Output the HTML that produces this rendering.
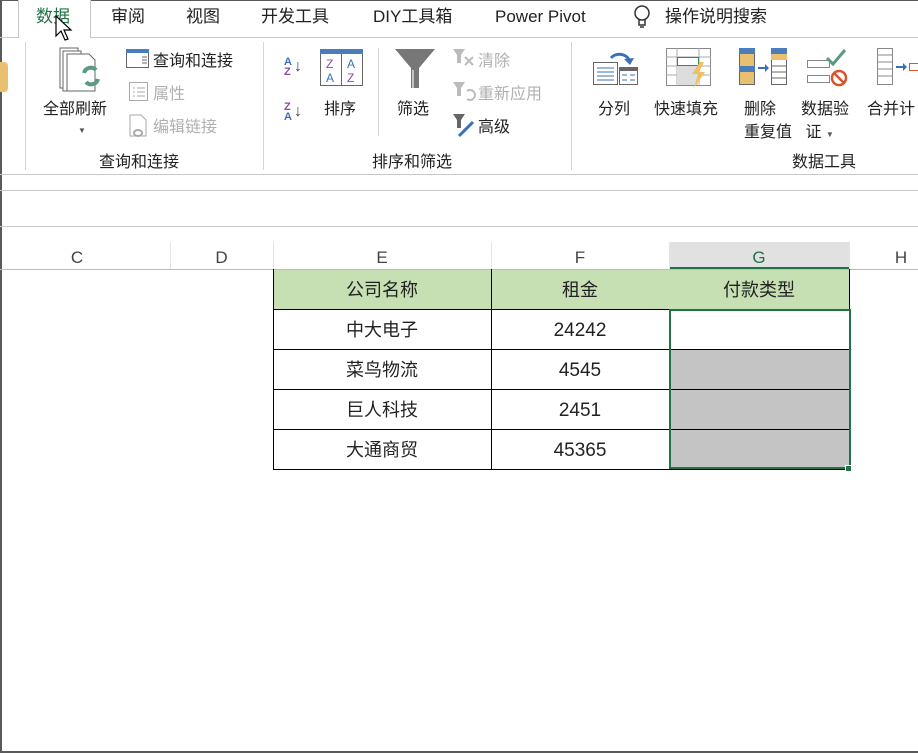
<!DOCTYPE html>
<html><head><meta charset="utf-8"><style>
*{margin:0;padding:0;box-sizing:border-box}
body{width:918px;height:753px;overflow:hidden;background:#fff;position:relative;font-family:"Liberation Sans","Noto Sans CJK SC",sans-serif;color:#222}
.a{position:absolute;white-space:nowrap}
.t{font-size:17px;top:0;height:32px;line-height:32px;margin-top:1px}
.r{font-size:16px;line-height:22px;margin-top:3px}
.g{color:#b0b0b0}
.h{height:1px;background:#c8c8c8;position:absolute}
.v{width:1px;background:#d4d4d4;position:absolute}
.ch{position:absolute;top:244px;height:26px;text-align:center;font-size:17px;color:#444;line-height:28px}
.c{position:absolute;text-align:center;font-size:18px;height:40px;line-height:40px;margin-top:2px}
.n{font-size:19px}
</style></head><body>
<div class="a" style="left:0;top:0;width:2px;height:753px;background:#5a5a5a"></div>
<div class="a" style="left:0;top:0;width:918px;height:1px;background:#5a5a5a"></div>
<div class="a" style="left:0;top:751px;width:918px;height:2px;background:#5a5a5a"></div>
<div class="a" style="left:18px;top:0;width:73px;height:38px;border:1px solid #c8c8c8;border-top:none;border-bottom:none;background:#fff"></div>
<div class="h" style="left:0;top:37px;width:18px"></div>
<div class="h" style="left:91px;top:37px;width:827px"></div>
<div class="a t" style="left:36px;color:#217346">数据</div>
<div class="a t" style="left:111px">审阅</div>
<div class="a t" style="left:186px">视图</div>
<div class="a t" style="left:261px">开发工具</div>
<div class="a t" style="left:373px">DIY工具箱</div>
<div class="a t" style="left:495px">Power Pivot</div>
<svg class="a" style="left:632px;top:4px" width="20" height="26"><circle cx="10" cy="9" r="7" fill="none" stroke="#333" stroke-width="1.5"/><path d="M7 16v5h6v-5M8 23h4" stroke="#333" fill="none" stroke-width="1.5"/></svg>
<div class="a t" style="left:665px">操作说明搜索</div>
<svg class="a" style="left:54px;top:14px" width="20" height="30"><path d="M2 2v20l5-5 4 9 3-1-4-9h7z" fill="#fff" stroke="#000" stroke-width="1.2"/></svg>
<div class="a" style="left:0;top:62px;width:8px;height:30px;background:#e8c070;border-radius:0 4px 4px 0"></div>
<div class="v" style="left:25px;top:42px;height:128px"></div>
<div class="v" style="left:263px;top:42px;height:128px"></div>
<div class="v" style="left:378px;top:48px;height:88px"></div>
<div class="v" style="left:571px;top:42px;height:128px"></div>
<svg class="a" style="left:58px;top:47px" width="50" height="50"><g fill="#fff" stroke="#666"><path d="M2 1h18v40H2z"/><path d="M5 4h18v40H5z"/><path d="M9 7h22l6 6v31H9z"/></g><path d="M26 26a7 7 0 0 1 12-3M40 32a7 7 0 0 1-12 3" stroke="#5a9a80" stroke-width="4" fill="none"/></svg>
<div class="a r" style="left:43px;top:96px">全部刷新</div>
<div class="a" style="left:78px;top:126px;font-size:8px;color:#555">▼</div>
<svg class="a" style="left:126px;top:49px" width="24" height="20"><rect x="0.5" y="0.5" width="22" height="18" fill="#fff" stroke="#666"/><rect x="0" y="0" width="23" height="4" fill="#4a7ebb"/><path d="M16 8h5M16 11h5M16 14h5" stroke="#666"/></svg>
<div class="a r" style="left:153px;top:48px">查询和连接</div>
<svg class="a" style="left:129px;top:82px" width="20" height="20"><rect x="0.5" y="0.5" width="18" height="18" fill="#fff" stroke="#aaa"/><path d="M4 6h2M8 6h8M4 10h2M8 10h8M4 14h2M8 14h8" stroke="#aaa"/></svg>
<div class="a r g" style="left:153px;top:81px">属性</div>
<svg class="a" style="left:129px;top:114px" width="22" height="24"><path d="M1 1h11l5 5v16H1z" fill="#fff" stroke="#aaa"/><ellipse cx="9" cy="19" rx="4" ry="3" fill="none" stroke="#aaa" stroke-width="2"/></svg>
<div class="a r g" style="left:153px;top:114px">编辑链接</div>
<div class="a r" style="left:99px;top:149px">查询和连接</div>
<div class="a" style="left:284px;top:57px;font-size:11px;font-weight:bold;line-height:10px;color:#3a70b8">A<br><span style="color:#8a4aa8">Z</span></div>
<div class="a" style="left:294px;top:58px;font-size:16px;color:#444">↓</div>
<div class="a" style="left:284px;top:102px;font-size:11px;font-weight:bold;line-height:10px;color:#8a4aa8">Z<br><span style="color:#3a70b8">A</span></div>
<div class="a" style="left:294px;top:103px;font-size:16px;color:#444">↓</div>
<svg class="a" style="left:320px;top:49px" width="44" height="38"><rect x="0.5" y="0.5" width="42" height="36" fill="#fff" stroke="#666"/><rect x="0" y="0" width="43" height="5" fill="#4a7ebb"/><path d="M21.5 5v32" stroke="#666"/><text x="6" y="19" font-size="12" fill="#8a4aa8" font-family="Liberation Sans">Z</text><text x="6" y="33" font-size="12" fill="#3a70b8" font-family="Liberation Sans">A</text><text x="27" y="19" font-size="12" fill="#3a70b8" font-family="Liberation Sans">A</text><text x="27" y="33" font-size="12" fill="#8a4aa8" font-family="Liberation Sans">Z</text></svg>
<div class="a r" style="left:324px;top:96px">排序</div>
<svg class="a" style="left:394px;top:48px" width="44" height="42"><path d="M1 1h40L25 20v20h-8V20z" fill="#777"/><path d="M19 22v18" stroke="#ddd" stroke-width="1.5"/></svg>
<div class="a r" style="left:397px;top:96px">筛选</div>
<svg class="a" style="left:453px;top:49px" width="24" height="20"><path d="M0 0h12l-4 6v8h-4V6z" fill="#bbb"/><path d="M12 8l8 8M20 8l-8 8" stroke="#bbb" stroke-width="2"/></svg>
<div class="a r g" style="left:478px;top:48px">清除</div>
<svg class="a" style="left:453px;top:82px" width="24" height="20"><path d="M0 0h12l-4 6v8h-4V6z" fill="#bbb"/><path d="M14 9a5 5 0 1 1 0 8" stroke="#bbb" stroke-width="2" fill="none"/></svg>
<div class="a r g" style="left:478px;top:81px">重新应用</div>
<svg class="a" style="left:453px;top:114px" width="24" height="24"><path d="M0 0h12l-4 6v8h-4V6z" fill="#666"/><path d="M6 22l14-14" stroke="#3a70b8" stroke-width="3"/></svg>
<div class="a r" style="left:478px;top:114px">高级</div>
<div class="a r" style="left:372px;top:149px">排序和筛选</div>
<svg class="a" style="left:593px;top:48px" width="46" height="40"><rect x="0.5" y="14.5" width="24" height="22" fill="#fff" stroke="#666"/><path d="M4 20h17M4 24h17M4 28h17M4 32h17" stroke="#3a70b8"/><rect x="26.5" y="19.5" width="18" height="17" fill="#fff" stroke="#666"/><rect x="26" y="19" width="19" height="4" fill="#666"/><path d="M29 27h5M37 27h5M29 32h5M37 32h5" stroke="#3a70b8"/><path d="M18 10a10 8 0 0 1 18 2" stroke="#3a70b8" stroke-width="3" fill="none"/><path d="M31 11l6 6 4-7z" fill="#3a70b8"/></svg>
<div class="a r" style="left:598px;top:96px">分列</div>
<svg class="a" style="left:666px;top:48px" width="48" height="44"><rect x="0.5" y="0.5" width="44" height="37" fill="#fff" stroke="#888"/><path d="M0 9h45M0 18h45M0 27h45M11 0v38M33 0v38" stroke="#aaa"/><rect x="11" y="18" width="22" height="19" fill="#ddd"/><rect x="11.5" y="9.5" width="21" height="8" fill="none" stroke="#2f8a66"/><path d="M34 14l-8 12h6l-4 14 11-16h-6l5-10z" fill="#f0c060"/></svg>
<div class="a r" style="left:654px;top:96px">快速填充</div>
<svg class="a" style="left:739px;top:48px" width="50" height="40"><rect x="0.5" y="0.5" width="15" height="36" fill="#e8c070" stroke="#666"/><rect x="0" y="0" width="16" height="6" fill="#4a7ebb"/><rect x="0" y="18" width="16" height="6" fill="#4a7ebb"/><path d="M19 20h8" stroke="#3a70b8" stroke-width="2"/><path d="M26 16l4 4-4 4z" fill="#3a70b8"/><rect x="32.5" y="0.5" width="15" height="36" fill="#fff" stroke="#666"/><rect x="32" y="0" width="16" height="6" fill="#4a7ebb"/><rect x="32" y="6" width="16" height="6" fill="#e8c070"/><path d="M32 18h16M32 24h16M32 30h16" stroke="#666"/></svg>
<div class="a r" style="left:744px;top:95px;line-height:23px">删除<br>重复值</div>
<svg class="a" style="left:807px;top:48px" width="44" height="40"><rect x="0.5" y="12.5" width="22" height="7" fill="#fff" stroke="#888"/><rect x="0.5" y="27.5" width="22" height="7" fill="#fff" stroke="#888"/><path d="M20 10l6 6 12-14" stroke="#5a9a80" stroke-width="3" fill="none"/><circle cx="32" cy="30" r="7" fill="#fff" stroke="#d9542b" stroke-width="2.5"/><path d="M27 25l10 10" stroke="#d9542b" stroke-width="2.5"/></svg>
<div class="a r" style="left:801px;top:95px;line-height:23px">数据验<br>&nbsp;证 <span style="font-size:8px;color:#555">▼</span></div>
<svg class="a" style="left:877px;top:48px" width="41" height="40"><rect x="0.5" y="0.5" width="15" height="36" fill="#fff" stroke="#888"/><path d="M0 7h16M0 14h16M0 21h16M0 28h16" stroke="#888"/><path d="M19 19h8" stroke="#3a70b8" stroke-width="2"/><path d="M26 15l4 4-4 4z" fill="#3a70b8"/><rect x="32.5" y="15.5" width="9" height="7" fill="#fff" stroke="#d9542b"/></svg>
<div class="a r" style="left:867px;top:96px">合并计</div>
<div class="a r" style="left:792px;top:149px">数据工具</div>
<div class="h" style="left:0;top:174px;width:918px"></div>
<div class="h" style="left:0;top:190px;width:918px"></div>
<div class="h" style="left:0;top:226px;width:918px"></div>
<div class="a" style="left:669px;top:242px;width:180px;height:27px;background:#e1e1e1"></div>
<div class="a" style="left:669px;top:267px;width:181px;height:2px;background:#217346"></div>
<div class="v" style="left:170px;top:242px;height:27px;background:#e4e4e4"></div>
<div class="v" style="left:273px;top:242px;height:27px;background:#e4e4e4"></div>
<div class="v" style="left:491px;top:242px;height:27px;background:#e4e4e4"></div>
<div class="v" style="left:669px;top:242px;height:27px;background:#e4e4e4"></div>
<div class="v" style="left:849px;top:242px;height:27px;background:#e4e4e4"></div>
<div class="h" style="left:0;top:269px;width:918px;background:#bcbcbc"></div>
<div class="ch" style="left:0;width:154px">C</div>
<div class="ch" style="left:170px;width:103px">D</div>
<div class="ch" style="left:273px;width:218px">E</div>
<div class="ch" style="left:491px;width:178px">F</div>
<div class="ch" style="left:669px;width:180px;color:#217346">G</div>
<div class="ch" style="left:849px;width:104px">H</div>
<div class="a" style="left:273px;top:270px;width:577px;height:39px;background:#c6e0b4"></div>
<div class="a" style="left:670px;top:349px;width:179px;height:120px;background:#c4c4c4"></div>
<div class="a" style="left:273px;top:309px;width:577px;height:1px;background:#000"></div>
<div class="a" style="left:273px;top:349px;width:577px;height:1px;background:#000"></div>
<div class="a" style="left:273px;top:389px;width:577px;height:1px;background:#000"></div>
<div class="a" style="left:273px;top:429px;width:577px;height:1px;background:#000"></div>
<div class="a" style="left:273px;top:469px;width:577px;height:1px;background:#000"></div>
<div class="a" style="left:273px;top:269px;width:1px;height:201px;background:#000"></div>
<div class="a" style="left:491px;top:269px;width:1px;height:201px;background:#000"></div>
<div class="a" style="left:849px;top:269px;width:1px;height:40px;background:#000"></div>
<div class="a" style="left:669px;top:309px;width:182px;height:160px;border:2px solid #217346"></div>
<div class="a" style="left:845px;top:465px;width:7px;height:7px;background:#217346;border:1px solid #fff"></div>
<div class="c" style="left:273px;top:268px;width:218px">公司名称</div>
<div class="c" style="left:491px;top:268px;width:178px">租金</div>
<div class="c" style="left:669px;top:268px;width:180px">付款类型</div>
<div class="c" style="left:273px;top:308px;width:218px">中大电子</div>
<div class="c n" style="left:491px;top:309px;width:178px">24242</div>
<div class="c" style="left:273px;top:348px;width:218px">菜鸟物流</div>
<div class="c n" style="left:491px;top:349px;width:178px">4545</div>
<div class="c" style="left:273px;top:388px;width:218px">巨人科技</div>
<div class="c n" style="left:491px;top:389px;width:178px">2451</div>
<div class="c" style="left:273px;top:428px;width:218px">大通商贸</div>
<div class="c n" style="left:491px;top:429px;width:178px">45365</div>
</body></html>
